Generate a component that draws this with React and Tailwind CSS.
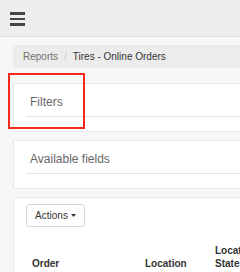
export default function App() {
  return (
    <div className="relative w-[240px] h-[272px] overflow-hidden bg-[#f7f7f7] font-['Liberation_Sans',Arial,sans-serif]">
      {/* Top bar */}
      <div className="h-[37px] bg-[#eeeeee] border-b border-[#e3e3e3] pl-[10px] pt-[12px]">
        <div className="flex flex-col gap-[3px] w-[15px]">
          <span className="block h-[2.5px] bg-[#4b4447]" />
          <span className="block h-[2.5px] bg-[#4b4447]" />
          <span className="block h-[2.5px] bg-[#4b4447]" />
        </div>
      </div>

      <div className="w-[320px] pl-[13px] pt-[8px]">
        {/* Breadcrumb */}
        <div className="h-[23px] rounded-[3px] bg-[#ececec] pl-[10px] flex items-center text-[10px]">
          <span className="text-[#6f6f6f]">Reports</span>
          <span className="text-[#c4c4c4] px-[6px]">/</span>
          <span className="text-[#333]">Tires - Online Orders</span>
        </div>

        {/* Filters */}
        <div className="mt-[15px] bg-white border border-[#e8e8e8] px-[12px] pt-[8px] pb-[14px]">
          <div className="h-[25px] border-b border-[#e4e4e4] pl-[4px] text-[12px] leading-[20px] text-[#666]">
            Filters
          </div>
        </div>

        {/* Available fields */}
        <div className="mt-[8px] bg-white border border-[#e8e8e8] px-[12px] pt-[8px] pb-[14px]">
          <div className="h-[25px] border-b border-[#e4e4e4] pl-[4px] text-[12px] leading-[20px] text-[#666]">
            Available fields
          </div>
        </div>

        {/* Report table */}
        <div className="mt-[8px] h-[120px] bg-white border border-[#e8e8e8] px-[12px] pt-[6px]">
          <button className="h-[23px] w-[59px] rounded-[3px] border border-[#d6d6d6] bg-white flex items-center justify-center gap-[3px] text-[10px] text-[#333]">
            Actions
            <svg width="5" height="3" viewBox="0 0 5 3">
              <path d="M0 0h5L2.5 3z" fill="#333" />
            </svg>
          </button>
          <div className="mt-[17px] flex items-end text-[10px] leading-[13px] font-bold text-[#333]">
            <div className="w-[113px] pl-[6px]">Order</div>
            <div className="w-[70px] pl-[6px]">Location</div>
            <div className="w-[50px] pl-[6px]">Location State</div>
          </div>
        </div>
      </div>

      {/* Highlight annotation */}
      <div className="absolute left-[8px] top-[73px] w-[77px] h-[56px] border-2 border-[#f5291b]" />
    </div>
  );
}
